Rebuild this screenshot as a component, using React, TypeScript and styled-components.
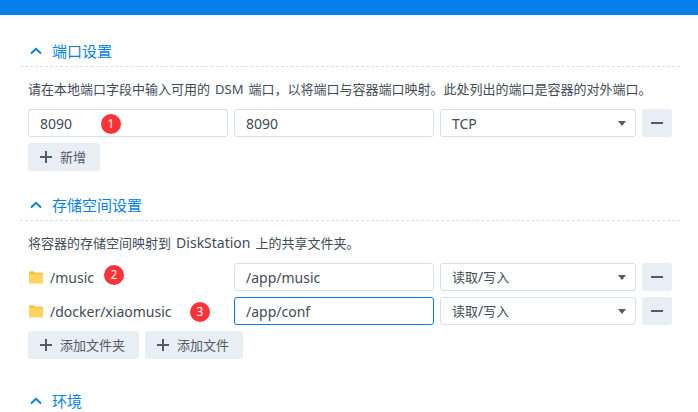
import React from "react";
import styled, { createGlobalStyle } from "styled-components";

const GlobalStyle = createGlobalStyle`
  html, body {
    margin: 0;
    padding: 0;
    background: #ffffff;
    overflow: hidden;
  }
  body {
    font-family: "Noto Sans", "Noto Sans CJK SC", sans-serif;
  }
`;

const Page = styled.div`
  position: relative;
  width: 698px;
  height: 412px;
  overflow: hidden;
`;

const TopBar = styled.div`
  height: 15px;
  background-color: #057fec;
`;

const Content = styled.div`
  padding: 25px 18px 0 20px;
  display: flex;
  flex-direction: column;
`;

const Section = styled.section<{ $gap: number }>`
  display: flex;
  flex-direction: column;
  margin-bottom: ${(props) => props.$gap}px;
`;

const SectionHeader = styled.div`
  height: 22px;
  padding: 0 0 4px 10px;
  display: flex;
  align-items: center;
  gap: 10px;
  border-bottom: 1px dashed #d7e1eb;
  color: #057fec;
  font-size: 15px;
  line-height: 22px;
`;

const SectionBody = styled.div`
  padding: 10px 0 0 8px;
  display: flex;
  flex-direction: column;
  gap: 6px;
`;

const Description = styled.div`
  height: 25px;
  margin-bottom: 1px;
  font-size: 13px;
  line-height: 24px;
  word-spacing: 1.7px;
  color: #414b55;
  white-space: nowrap;
`;

const Latin = styled.span`
  font-size: 14px;
`;

const Row = styled.div`
  display: flex;
  align-items: center;
  gap: 6px;
  height: 28px;
`;

const Field = styled.div<{ $focused?: boolean }>`
  box-sizing: border-box;
  width: 200px;
  height: 28px;
  padding: 0 11px;
  display: flex;
  align-items: center;
  border: 1px solid ${(props) => (props.$focused ? "#057fec" : "#d7e1eb")};
  border-radius: 3px;
  font-size: 14px;
  color: #414b55;
`;

const Select = styled(Field)`
  width: 196px;
  justify-content: space-between;
  padding-right: 9px;
`;

const SelectText = styled.span<{ $cjk?: boolean }>`
  font-size: ${(props) => (props.$cjk ? 13 : 14)}px;
  padding-bottom: ${(props) => (props.$cjk ? 2 : 0)}px;
`;

const Caret = styled.span`
  width: 0;
  height: 0;
  border-left: 4.5px solid transparent;
  border-right: 4.5px solid transparent;
  border-top: 5px solid #525c66;
`;

const Button = styled.div`
  box-sizing: border-box;
  height: 28px;
  padding: 0 14px 0 12px;
  display: flex;
  align-items: center;
  gap: 8px;
  background-color: #e9edf4;
  border-radius: 3px;
  font-size: 13px;
  color: #525c66;
`;

const ButtonLabel = styled.span`
  padding-bottom: 2px;
`;

const RemoveButton = styled(Button)`
  width: 30px;
  padding: 0;
  justify-content: center;
`;

const FolderCell = styled.div`
  box-sizing: border-box;
  width: 200px;
  padding-left: 1px;
  display: flex;
  align-items: center;
  gap: 7px;
  font-size: 14px;
  color: #414b55;
`;

const Badge = styled.span<{ $x: number; $y: number }>`
  position: absolute;
  left: ${(props) => props.$x}px;
  top: ${(props) => props.$y}px;
  width: 20px;
  height: 20px;
  border-radius: 50%;
  background-color: #fb3338;
  color: #ffffff;
  font-size: 12px;
  line-height: 19px;
  text-align: center;
`;

const ChevronUp = () => (
  <svg width="12" height="8" viewBox="0 0 12 8" fill="none">
    <path d="M1 6.5 L6 1.8 L11 6.5" stroke="#057fec" strokeWidth="2" />
  </svg>
);

const PlusIcon = () => (
  <svg width="12" height="12" viewBox="0 0 12 12">
    <path d="M5 0h2v5h5v2H7v5H5V7H0V5h5z" fill="#525c66" />
  </svg>
);

const MinusIcon = () => (
  <svg width="12" height="2" viewBox="0 0 12 2">
    <rect width="12" height="2" fill="#525c66" />
  </svg>
);

const FolderIcon = () => (
  <svg width="14" height="13" viewBox="0 0 15 13">
    <path d="M0 1a1 1 0 0 1 1-1h4l1.5 1.5H14a1 1 0 0 1 1 1V12a1 1 0 0 1-1 1H1a1 1 0 0 1-1-1z" fill="#ffd45f" />
    <path d="M0 3h15v-.5a1 1 0 0 0-1-1H6.5L5 0H1a1 1 0 0 0-1 1z" fill="#f9c33f" />
  </svg>
);

const SectionTitle: React.FC<{ title: string }> = ({ title }) => (
  <SectionHeader>
    <ChevronUp />
    <span>{title}</span>
  </SectionHeader>
);

const ProtocolSelect = () => (
  <Select>
    <SelectText>TCP</SelectText>
    <Caret />
  </Select>
);

const AccessSelect = () => (
  <Select>
    <SelectText $cjk>
      读取<Latin>/</Latin>写入
    </SelectText>
    <Caret />
  </Select>
);

const AddButton: React.FC<{ label: string }> = ({ label }) => (
  <Button>
    <PlusIcon />
    <ButtonLabel>{label}</ButtonLabel>
  </Button>
);

const App: React.FC = () => {
  return (
    <Page>
      <GlobalStyle />
      <TopBar />
      <Content>
        <Section $gap={23}>
          <SectionTitle title="端口设置" />
          <SectionBody>
            <Description>
              请在本地端口字段中输入可用的 DSM 端口，以将端口与容器端口映射。此处列出的端口是容器的对外端口。
            </Description>
            <Row>
              <Field>8090</Field>
              <Field>8090</Field>
              <ProtocolSelect />
              <RemoveButton>
                <MinusIcon />
              </RemoveButton>
            </Row>
            <Row>
              <AddButton label="新增" />
            </Row>
          </SectionBody>
        </Section>
        <Section $gap={31}>
          <SectionTitle title="存储空间设置" />
          <SectionBody>
            <Description>
              将容器的存储空间映射到 <Latin>DiskStation</Latin> 上的共享文件夹。
            </Description>
            <Row>
              <FolderCell>
                <FolderIcon />
                /music
              </FolderCell>
              <Field>/app/music</Field>
              <AccessSelect />
              <RemoveButton>
                <MinusIcon />
              </RemoveButton>
            </Row>
            <Row>
              <FolderCell>
                <FolderIcon />
                /docker/xiaomusic
              </FolderCell>
              <Field $focused>/app/conf</Field>
              <AccessSelect />
              <RemoveButton>
                <MinusIcon />
              </RemoveButton>
            </Row>
            <Row>
              <AddButton label="添加文件夹" />
              <AddButton label="添加文件" />
            </Row>
          </SectionBody>
        </Section>
        <SectionTitle title="环境" />
      </Content>
      <Badge $x={101} $y={114}>1</Badge>
      <Badge $x={104} $y={265}>2</Badge>
      <Badge $x={190} $y={302}>3</Badge>
    </Page>
  );
};

export default App;
